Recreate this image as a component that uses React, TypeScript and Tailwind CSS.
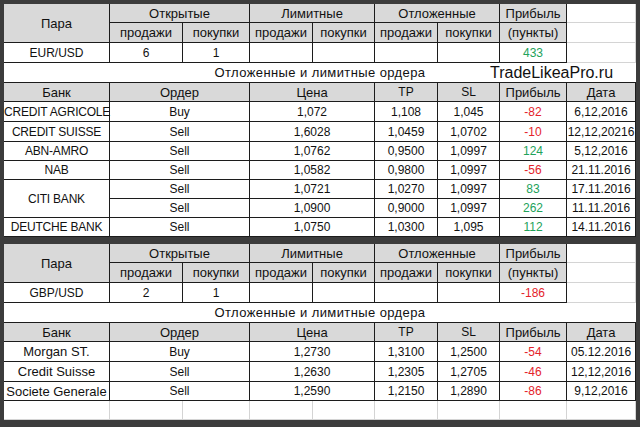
import React from "react";

const D = "border-r border-b border-[#1c1c1c]";
const L = "border-r border-b border-[#d4d4d4]";
const H = "bg-[#d9d9d9] text-[13px]";
const G = "text-[#22a25a]";
const R = "text-[#e4232b]";

type Row = { bank?: string; mixed?: boolean; span?: number; skip?: boolean; order: string; price: string; tp: string; sl: string; profit: string; pos: boolean; date: string };

const rows1: Row[] = [
  { bank: "CREDIT AGRICOLE", order: "Buy", price: "1,072", tp: "1,108", sl: "1,045", profit: "-82", pos: false, date: "6,12,2016" },
  { bank: "CREDIT SUISSE", order: "Sell", price: "1,6028", tp: "1,0459", sl: "1,0702", profit: "-10", pos: false, date: "12,12,20216" },
  { bank: "ABN-AMRO", order: "Sell", price: "1,0762", tp: "0,9500", sl: "1,0997", profit: "124", pos: true, date: "5,12,2016" },
  { bank: "NAB", order: "Sell", price: "1,0582", tp: "0,9800", sl: "1,0997", profit: "-56", pos: false, date: "21.11.2016" },
  { bank: "CITI BANK", span: 2, order: "Sell", price: "1,0721", tp: "1,0270", sl: "1,0997", profit: "83", pos: true, date: "17.11.2016" },
  { skip: true, order: "Sell", price: "1,0900", tp: "0,9000", sl: "1,0997", profit: "262", pos: true, date: "11.11.2016" },
  { bank: "DEUTCHE BANK", order: "Sell", price: "1,0750", tp: "1,0300", sl: "1,095", profit: "112", pos: true, date: "14.11.2016" },
];

const rows2: Row[] = [
  { bank: "Morgan ST.", mixed: true, order: "Buy", price: "1,2730", tp: "1,3100", sl: "1,2500", profit: "-54", pos: false, date: "05.12.2016" },
  { bank: "Credit Suisse", mixed: true, order: "Sell", price: "1,2630", tp: "1,2305", sl: "1,2705", profit: "-46", pos: false, date: "12,12,2016" },
  { bank: "Societe Generale", mixed: true, order: "Sell", price: "1,2590", tp: "1,2150", sl: "1,2890", profit: "-86", pos: false, date: "9,12,2016" },
];

const heights1 = ["h-[20px]", "h-[20px]", "h-[19px]", "h-[19px]", "h-[19px]", "h-[19px]", "h-[19px]"];
const heights2 = ["h-[20px]", "h-[20px]", "h-[19px]"];

function Cols() {
  return (
    <colgroup>
      <col className="w-[106px]" />
      <col className="w-[73px]" />
      <col className="w-[67px]" />
      <col className="w-[63px]" />
      <col className="w-[62px]" />
      <col className="w-[63px]" />
      <col className="w-[62px]" />
      <col className="w-[67px]" />
      <col className="w-[69px]" />
    </colgroup>
  );
}

function Block({ pair, sells, buys, total, totalPos, rows, heights, showBrand, emptyRow }: { pair: string; sells: string; buys: string; total: string; totalPos: boolean; rows: Row[]; heights: string[]; showBrand: boolean; emptyRow: boolean }) {
  return (
    <table className="table-fixed border-separate border-spacing-0 w-[632px] bg-white text-[12px] leading-none text-[#111] text-center">
      <Cols />
      <tbody>
        <tr className="h-[19px]">
          <td rowSpan={2} className={`${D} ${H}`}>Пара</td>
          <td colSpan={2} className={`${D} ${H}`}>Открытые</td>
          <td colSpan={2} className={`${D} ${H}`}>Лимитные</td>
          <td colSpan={2} className={`${D} ${H}`}>Отложенные</td>
          <td className={`${D} ${H}`}>Прибыль</td>
          <td className={L}></td>
        </tr>
        <tr className="h-[20px]">
          <td className={`${D} ${H}`}>продажи</td>
          <td className={`${D} ${H}`}>покупки</td>
          <td className={`${D} ${H}`}>продажи</td>
          <td className={`${D} ${H}`}>покупки</td>
          <td className={`${D} ${H}`}>продажи</td>
          <td className={`${D} ${H}`}>покупки</td>
          <td className={`${D} ${H}`}>(пункты)</td>
          <td className={L}></td>
        </tr>
        <tr className="h-[20px]">
          <td className={D}>{pair}</td>
          <td className={D}>{sells}</td>
          <td className={D}>{buys}</td>
          <td className={D}></td>
          <td className={D}></td>
          <td className={D}></td>
          <td className={D}></td>
          <td className={`${D} ${totalPos ? G : R}`}>{total}</td>
          <td className={L}></td>
        </tr>
        <tr className="h-[20px]">
          <td colSpan={9} className="border-b border-[#1c1c1c] relative">
            <span className="text-[13px] tracking-[0.4px]">Отложенные и лимитные ордера</span>
            {showBrand && (
              <span className="absolute left-[486px] top-[1px] text-[16px] leading-[18px]">TradeLikeaPro.ru</span>
            )}
          </td>
        </tr>
        <tr className="h-[19px]">
          <td className={`${D} ${H}`}>Банк</td>
          <td colSpan={2} className={`${D} ${H}`}>Ордер</td>
          <td colSpan={2} className={`${D} ${H}`}>Цена</td>
          <td className={`${D} bg-[#d9d9d9]`}>TP</td>
          <td className={`${D} bg-[#d9d9d9]`}>SL</td>
          <td className={`${D} ${H}`}>Прибыль</td>
          <td className={`${D} ${H}`}>Дата</td>
        </tr>
        {rows.map((r, i) => (
          <tr key={i} className={heights[i]}>
            {!r.skip && (
              <td
                rowSpan={r.span ?? 1}
                className={`${D} whitespace-nowrap overflow-visible ${r.mixed ? "text-[13px]" : "tracking-[-0.2px]"}`}
              >
                {r.bank}
              </td>
            )}
            <td colSpan={2} className={D}>{r.order}</td>
            <td colSpan={2} className={D}>{r.price}</td>
            <td className={D}>{r.tp}</td>
            <td className={D}>{r.sl}</td>
            <td className={`${D} ${r.pos ? G : R}`}>{r.profit}</td>
            <td className={`${D} whitespace-nowrap`}>{r.date}</td>
          </tr>
        ))}
        {emptyRow && (
          <tr className="h-[19px]">
            <td className={L}></td>
            <td className={L}></td>
            <td className={L}></td>
            <td className={L}></td>
            <td className={L}></td>
            <td className={L}></td>
            <td className={L}></td>
            <td className={L}></td>
            <td className={L}></td>
          </tr>
        )}
      </tbody>
    </table>
  );
}

export default function App() {
  return (
    <div
      className="w-[640px] h-[427px] overflow-hidden bg-[#3c3c3c] pt-[4px] px-[4px] pb-[7px] flex flex-col gap-[7px]"
      style={{ fontFamily: '"Liberation Sans", Arial, sans-serif' }}
    >
      <Block pair="EUR/USD" sells="6" buys="1" total="433" totalPos={true} rows={rows1} heights={heights1} showBrand={true} emptyRow={false} />
      <Block pair="GBP/USD" sells="2" buys="1" total="-186" totalPos={false} rows={rows2} heights={heights2} showBrand={false} emptyRow={true} />
    </div>
  );
}
